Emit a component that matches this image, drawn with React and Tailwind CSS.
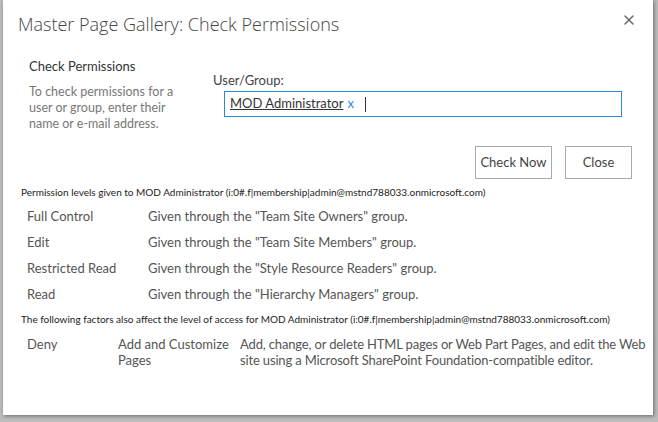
import { X } from 'lucide-react';

const rows = [
  ['Full Control', 'Given through the "Team Site Owners" group.'],
  ['Edit', 'Given through the "Team Site Members" group.'],
  ['Restricted Read', 'Given through the "Style Resource Readers" group.'],
  ['Read', 'Given through the "Hierarchy Managers" group.'],
];

export default function App() {
  return (
    <div className="h-[422px] w-[658px] overflow-hidden bg-[#bdbdbd] font-['Lato',sans-serif]">
      <div className="ml-[3px] h-[415px] w-[650px] bg-white shadow-[1px_1px_4px_rgba(0,0,0,0.45)]">
        {/* header */}
        <div className="flex items-start justify-between pl-[15px] pr-[16px] pt-[10px]">
          <h1 className="font-['Open_Sans',sans-serif] text-[18px] font-light leading-[28px] text-[#444]">Master Page Gallery: Check Permissions</h1>
          <X size={16} strokeWidth={2.2} className="mt-[2px] text-[#666]" />
        </div>

        {/* form */}
        <div className="mt-[20px] flex">
          <div className="w-[210px] pl-[26px]">
            <div className="text-[13px] leading-[16px] text-[#333]">Check Permissions</div>
            <p className="mt-[10px] w-[150px] text-[12.5px] leading-[16px] text-[#777]">
              To check permissions for a user or group, enter their name or e-mail address.
            </p>
          </div>
          <div className="pt-[14px]">
            <div className="text-[13px] leading-[16px] text-[#444]">User/Group:</div>
            <div className="ml-[11px] mt-[3px] flex h-[26px] w-[398px] items-center border border-[#2b88d8] px-[5px] text-[13px] text-[#333]">
              <span className="underline">MOD Administrator</span>
              <span className="ml-[4px] text-[#2b88d8]">x</span>
              <span className="ml-[11px] h-[15px] w-px bg-[#333]" />
            </div>
          </div>
        </div>

        {/* buttons */}
        <div className="mt-[14px] flex justify-end gap-[13px] pr-[21px]">
          <button className="h-[33px] w-[77px] border border-[#ababab] bg-white text-[13px] text-[#444]">Check Now</button>
          <button className="h-[33px] w-[67px] border border-[#ababab] bg-white text-[13px] text-[#444]">Close</button>
        </div>

        {/* results */}
        <div className="mt-[5px] pl-[18px] text-[10px] leading-[16px] text-[#222]">
          Permission levels given to MOD Administrator (i:0#.f|membership|admin@mstnd788033.onmicrosoft.com)
        </div>
        <div className="mt-[4px] pl-[24px]">
          {rows.map(([level, desc]) => (
            <div key={level} className="flex h-[26px] items-center text-[13px] text-[#555]">
              <div className="w-[121px]">{level}</div>
              <div>{desc}</div>
            </div>
          ))}
        </div>
        <div className="mt-[3px] pl-[18px] text-[10px] leading-[16px] text-[#222]">
          The following factors also affect the level of access for MOD Administrator (i:0#.f|membership|admin@mstnd788033.onmicrosoft.com)
        </div>
        <div className="mt-[9px] flex pl-[24px] text-[13px] leading-[16px] text-[#555]">
          <div className="w-[91px]">Deny</div>
          <div className="w-[122px]">Add and Customize Pages</div>
          <div className="w-[406px] tracking-[-0.15px]">
            Add, change, or delete HTML pages or Web Part Pages, and edit the Web site using a Microsoft SharePoint Foundation-compatible editor.
          </div>
        </div>
      </div>
    </div>
  );
}
